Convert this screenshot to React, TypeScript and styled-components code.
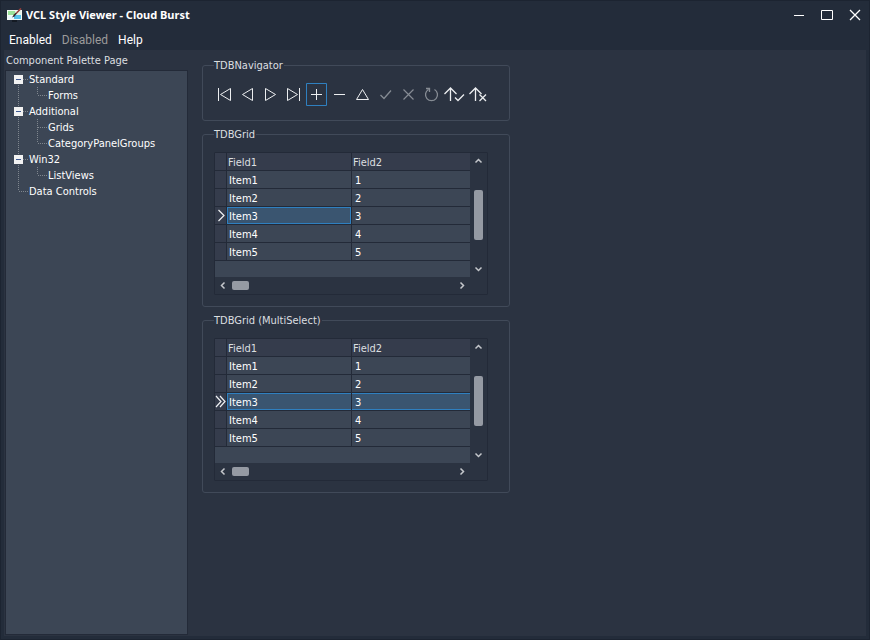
import React from "react";
import styled, { createGlobalStyle } from "styled-components";

const c = {
  frame: "#232c3a",
  edge: "#1c2431",
  body: "#2b3341",
  panel: "#3c4655",
  line: "#232a38",
  groupLine: "#414a59",
  header: "#353c4c",
  text: "#ffffff",
  soft: "#dcdfe0",
  muted: "#9b9b9b",
  accent: "#2f80c0",
  selected: "#3a5570",
  thumb: "#959aa3",
};

const GlobalStyle = createGlobalStyle`
  * { box-sizing: border-box; }
  body {
    margin: 0;
    background: ${c.frame};
    font: 11px/16px "DejaVu Sans Condensed", "Noto Sans", sans-serif;
    color: ${c.text};
  }
  button { font: inherit; color: inherit; background: none; border: 0; padding: 0; margin: 0; }
  ul { list-style: none; margin: 0; padding: 0; }
`;

const Window = styled.div`
  display: flex;
  flex-direction: column;
  min-height: 100vh;
  padding: 0 3px 3px;
  background: ${c.frame};
  border: 1px solid ${c.edge};
`;

const TitleBar = styled.header`
  display: flex;
  align-items: center;
  gap: 4px;
  height: 28px;
  padding-left: 3px;
`;

const Title = styled.h1`
  flex: 1;
  margin: 0;
  font: bold 11px/16px "Noto Sans", sans-serif;
`;

const WindowControls = styled.div`
  display: flex;
  gap: 6px;
`;

const WindowButton = styled.button`
  display: grid;
  place-items: center;
  width: 22px;
  height: 28px;
`;

const MenuBar = styled.nav`
  display: flex;
  gap: 10px;
  align-items: center;
  height: 21px;
  padding-left: 5px;
`;

const MenuItem = styled.button`
  font-family: Roboto, "Noto Sans", sans-serif;
  font-size: 12px;
  &:disabled { color: ${c.muted}; }
`;

const Client = styled.div`
  flex: 1;
  display: flex;
  gap: 14px;
  background: ${c.body};
`;

const Sidebar = styled.aside`
  display: flex;
  flex-direction: column;
  flex: 0 0 184px;
  padding: 3px 0 1px 1px;
`;

const SidebarLabel = styled.h2`
  margin: 0;
  padding: 0 1px 1px;
  font: inherit;
  color: ${c.soft};
`;

const Tree = styled.ul`
  flex: 1;
  background: ${c.panel};
  border: 1px solid ${c.line};
`;

const TreeRow = styled.div`
  display: flex;
  height: 16px;
  padding-left: 7px;
`;

const TreeText = styled.span`
  padding: 1px 0 0 1px;
  white-space: nowrap;
`;

const Main = styled.main`
  flex: 1;
  display: flex;
  flex-direction: column;
  gap: 7px;
  max-width: 308px;
  padding-top: 9px;
`;

const Group = styled.fieldset`
  min-width: 0;
  margin: 0;
  padding: 11px;
  border: 1px solid ${c.groupLine};
  border-radius: 3px;
`;

const Legend = styled.legend`
  padding: 0 1px 0 0;
  height: 13px;
  line-height: 13px;
  color: ${c.soft};
`;

const NavBar = styled.div`
  display: flex;
  margin-left: -1px;
  height: 26px;
  color: #eceef0;
`;

const NavButton = styled.button<{ $hot?: boolean }>`
  display: grid;
  place-items: center;
  width: 21px;
  height: 23px;
  margin: 0 1px;
  border-radius: 1px;
  box-shadow: ${(p) => (p.$hot ? `inset 0 0 0 1px ${c.accent}` : "none")};
  &:disabled { color: #868c94; }
  svg { flex: none; margin: 0 -1px; }
`;

const GridFrame = styled.div`
  display: grid;
  grid-template-columns: 1fr 17px;
  grid-template-rows: 124px 17px;
  margin-right: 10px;
  border: 1px solid ${c.line};
  border-radius: 1px;
`;

const GridArea = styled.div`
  min-width: 0;
  background: ${c.panel};
`;

const Table = styled.table`
  width: 100%;
  table-layout: fixed;
  border-collapse: separate;
  border-spacing: 0;
  color: ${c.text};
`;

const HeadCell = styled.th<{ $width?: number }>`
  width: ${(p) => (p.$width ? `${p.$width}px` : "auto")};
  height: 18px;
  padding: 2px 1px 0;
  text-align: left;
  font-weight: normal;
  line-height: 15px;
  color: ${c.soft};
  background: ${c.header};
  border: 0 solid ${c.line};
  border-bottom-width: 1px;
  &:not(:last-child) { border-right-width: 1px; }
`;

const Marker = styled.td`
  height: 18px;
  padding: 0;
  line-height: 0;
  background: ${c.header};
  border: solid ${c.line};
  border-width: 0 1px 1px 0;
`;

const Cell = styled.td<{ $sel?: "box" | "start" | "end" }>`
  height: 18px;
  padding: 2px 3px 0;
  line-height: 15px;
  border: 0 solid ${c.line};
  border-bottom-width: 1px;
  background: ${(p) => (p.$sel ? c.selected : c.panel)};
  background-clip: padding-box;
  box-shadow: ${(p) =>
    p.$sel === "box"
      ? `inset 0 0 0 1px ${c.accent}`
      : p.$sel === "start"
      ? `inset 1px 1px 0 ${c.accent}, inset 0 -1px 0 ${c.accent}`
      : p.$sel === "end"
      ? `inset 0 1px 0 ${c.accent}, inset 0 -1px 0 ${c.accent}`
      : "none"};
  &:not(:last-child) { border-right-width: 1px; padding: 2px 2px 0; }
`;

const ScrollBar = styled.div<{ $vertical?: boolean }>`
  display: flex;
  align-items: center;
  flex-direction: ${(p) => (p.$vertical ? "column" : "row")};
`;

const ScrollButton = styled.button<{ $last?: boolean; $vertical?: boolean }>`
  display: grid;
  place-items: center;
  width: 17px;
  height: 17px;
  color: #c4c7cb;
  margin-left: ${(p) => (p.$last && !p.$vertical ? "auto" : "0")};
  margin-top: ${(p) => (p.$last && p.$vertical ? "auto" : "0")};
`;

const Thumb = styled.div<{ $vertical?: boolean }>`
  width: ${(p) => (p.$vertical ? "9px" : "17px")};
  height: ${(p) => (p.$vertical ? "50px" : "9px")};
  margin-top: ${(p) => (p.$vertical ? "20px" : "0")};
  border-radius: 2px;
  background: ${c.thumb};
`;

function AppIcon() {
  return (
    <svg width="15" height="14" viewBox="0 0 15 14" aria-hidden="true">
      <rect x="0" y="2" width="15" height="10" fill="#f4fbf6" />
      <rect x="1" y="3" width="7" height="4" fill="#9be39b" />
      <rect x="8" y="3" width="6" height="4" fill="#e6f5e8" />
      <rect x="1" y="8" width="6" height="3" fill="#eaf7fd" />
      <rect x="7" y="7" width="7" height="4" fill="#57c3ec" />
      <path d="M5 13h5" stroke="#10151d" strokeWidth="1.5" />
      <path d="M5 9.5l2-3 1.500 1.500z" fill="#20242a" />
      <path d="M7 7.500l2.500-2.500" stroke="#3a2226" strokeWidth="1.6" />
      <path d="M9.500 5L14 0.500" stroke="#9c3f3c" strokeWidth="1.600" />
    </svg>
  );
}

type Glyph = { label: string; disabled?: boolean; hot?: boolean; draw: React.ReactNode };

const navGlyphs: Glyph[] = [
  { label: "First", draw: <path d="M5.500 5V18M17.500 5.500V17.500L7.500 11.500Z" /> },
  { label: "Prior", draw: <path d="M16.500 5.500V17.500L6.500 11.500Z" /> },
  { label: "Next", draw: <path d="M6.500 5.500V17.500L16.500 11.500Z" /> },
  { label: "Last", draw: <path d="M17.500 5V18M5.500 5.500V17.500L15.500 11.500Z" /> },
  { label: "Insert", hot: true, draw: <path d="M6 11.500H17M11.500 6V17" /> },
  { label: "Delete", draw: <path d="M6 11.500H17" /> },
  { label: "Edit", draw: <path d="M11.500 6.500L17.500 16.500H5.500Z" /> },
  { label: "Post", disabled: true, draw: <path strokeWidth="1.300" d="M6.500 12L10 15.500L17 7.500" /> },
  { label: "Cancel", disabled: true, draw: <path strokeWidth="1.200" d="M6.500 6.500L16.500 16.500M16.500 6.500L6.500 16.500" /> },
  {
    label: "Refresh",
    disabled: true,
    draw: <path strokeWidth="1.300" d="M14.500 6.500A6 6 0 1 1 8.500 6.500M6 5.500H9.500V9" />,
  },
  {
    label: "Apply updates",
    draw: <path strokeWidth="1.300" d="M7.500 5V18M1.500 11L7.500 5L13.500 11M12 14.500L15 17.500L21 11.500" />,
  },
  {
    label: "Cancel updates",
    draw: <path strokeWidth="1.300" d="M9.500 5V18M3.500 11L9.500 5L15.500 11M13.500 11.500L20 18M20 11.500L13.500 18" />,
  },
];

function Navigator() {
  return (
    <NavBar role="toolbar" aria-label="Record navigator">
      {navGlyphs.map((g) => (
        <NavButton key={g.label} type="button" aria-label={g.label} disabled={g.disabled} $hot={g.hot}>
          <svg width="23" height="23" viewBox="0 0 23 23" fill="none" stroke="currentColor">
            {g.draw}
          </svg>
        </NavButton>
      ))}
    </NavBar>
  );
}

const arrows = {
  up: "M1.500 5.500L4.500 2.500L7.500 5.500",
  down: "M1.500 3.500L4.500 6.500L7.500 3.500",
  left: "M5.500 1.500L2.500 4.500L5.500 7.500",
  right: "M3.500 1.500L6.500 4.500L3.500 7.500",
};

function Arrow({ dir }: { dir: keyof typeof arrows }) {
  return (
    <svg width="9" height="9" viewBox="0 0 9 9" fill="none" stroke="currentColor" strokeWidth="1.500">
      <path d={arrows[dir]} />
    </svg>
  );
}

function DataGrid({ multi }: { multi?: boolean }) {
  return (
    <GridFrame>
      <GridArea>
        <Table>
          <thead>
            <tr>
              <HeadCell $width={12} />
              <HeadCell $width={125}>Field1</HeadCell>
              <HeadCell>Field2</HeadCell>
            </tr>
          </thead>
          <tbody>
            {[1, 2, 3, 4, 5].map((n) => {
              const sel = n === 3;
              return (
                <tr key={n} aria-selected={sel}>
                  <Marker>
                    {sel && (
                      <svg width="11" height="13" viewBox="0 0 11 13" fill="none" stroke="#f0f2f4" strokeWidth="1.200">
                        <path d={multi ? "M1 1L6 6.500L1 12M5 1L10 6.500L5 12" : "M3.500 1L9 6.500L3.500 12"} />
                      </svg>
                    )}
                  </Marker>
                  <Cell $sel={sel ? (multi ? "start" : "box") : undefined}>Item{n}</Cell>
                  <Cell $sel={sel && multi ? "end" : undefined}>{n}</Cell>
                </tr>
              );
            })}
          </tbody>
        </Table>
      </GridArea>
      <ScrollBar $vertical>
        <ScrollButton type="button" aria-label="Scroll up"><Arrow dir="up" /></ScrollButton>
        <Thumb $vertical />
        <ScrollButton type="button" aria-label="Scroll down" $last $vertical><Arrow dir="down" /></ScrollButton>
      </ScrollBar>
      <ScrollBar>
        <ScrollButton type="button" aria-label="Scroll left"><Arrow dir="left" /></ScrollButton>
        <Thumb />
        <ScrollButton type="button" aria-label="Scroll right" $last><Arrow dir="right" /></ScrollButton>
      </ScrollBar>
    </GridFrame>
  );
}

type Node = { text: string; child?: boolean; first?: boolean; last?: boolean; box?: boolean; rootLine?: boolean };

const nodes: Node[] = [
  { text: "Standard", box: true, first: true, rootLine: true },
  { text: "Forms", child: true, last: true, rootLine: true },
  { text: "Additional", box: true, rootLine: true },
  { text: "Grids", child: true, rootLine: true },
  { text: "CategoryPanelGroups", child: true, last: true, rootLine: true },
  { text: "Win32", box: true, rootLine: true },
  { text: "ListViews", child: true, last: true, rootLine: true },
  { text: "Data Controls", last: true },
];

function Branch({ node }: { node: Node }) {
  const width = node.child ? 34 : 15;
  const root = `M5.500 ${node.first ? 8 : 0}V${node.rootLine ? 16 : 8}`;
  const twig = node.child ? `M24.500 0V${node.last ? 8 : 16}M25 8.500H34` : "M6 8.500H15";
  return (
    <svg width={width} height="16" viewBox={`0 0 ${width} 16`} fill="none" aria-hidden="true">
      <path d={root + twig} stroke="#7f868e" strokeDasharray="1 1" />
      {node.box && (
        <>
          <rect x="1" y="4" width="9" height="9" fill="#f2f2f2" />
          <path d="M3 8.500H8" stroke="#3f5b94" />
        </>
      )}
    </svg>
  );
}

export default function App() {
  return (
    <>
      <GlobalStyle />
      <Window>
        <TitleBar>
          <AppIcon />
          <Title>VCL Style Viewer - Cloud Burst</Title>
          <WindowControls>
            <WindowButton type="button" aria-label="Minimize">
              <svg width="12" height="12" fill="none" stroke="#fff"><path d="M1 6.500H11" /></svg>
            </WindowButton>
            <WindowButton type="button" aria-label="Maximize">
              <svg width="12" height="12" fill="none" stroke="#fff"><path d="M0.500 1.500H11.500V10.500H0.500Z" /></svg>
            </WindowButton>
            <WindowButton type="button" aria-label="Close">
              <svg width="12" height="12" fill="none" stroke="#fff" strokeWidth="1.300"><path d="M1 1L11 11M11 1L1 11" /></svg>
            </WindowButton>
          </WindowControls>
        </TitleBar>
        <MenuBar>
          <MenuItem type="button">Enabled</MenuItem>
          <MenuItem type="button" disabled>Disabled</MenuItem>
          <MenuItem type="button">Help</MenuItem>
        </MenuBar>
        <Client>
          <Sidebar>
            <SidebarLabel>Component Palette Page</SidebarLabel>
            <Tree>
              {nodes.map((n) => (
                <li key={n.text}>
                  <TreeRow>
                    <Branch node={n} />
                    <TreeText>{n.text}</TreeText>
                  </TreeRow>
                </li>
              ))}
            </Tree>
          </Sidebar>
          <Main>
            <Group>
              <Legend>TDBNavigator</Legend>
              <Navigator />
            </Group>
            <Group>
              <Legend>TDBGrid</Legend>
              <DataGrid />
            </Group>
            <Group>
              <Legend>TDBGrid (MultiSelect)</Legend>
              <DataGrid multi />
            </Group>
          </Main>
        </Client>
      </Window>
    </>
  );
}
